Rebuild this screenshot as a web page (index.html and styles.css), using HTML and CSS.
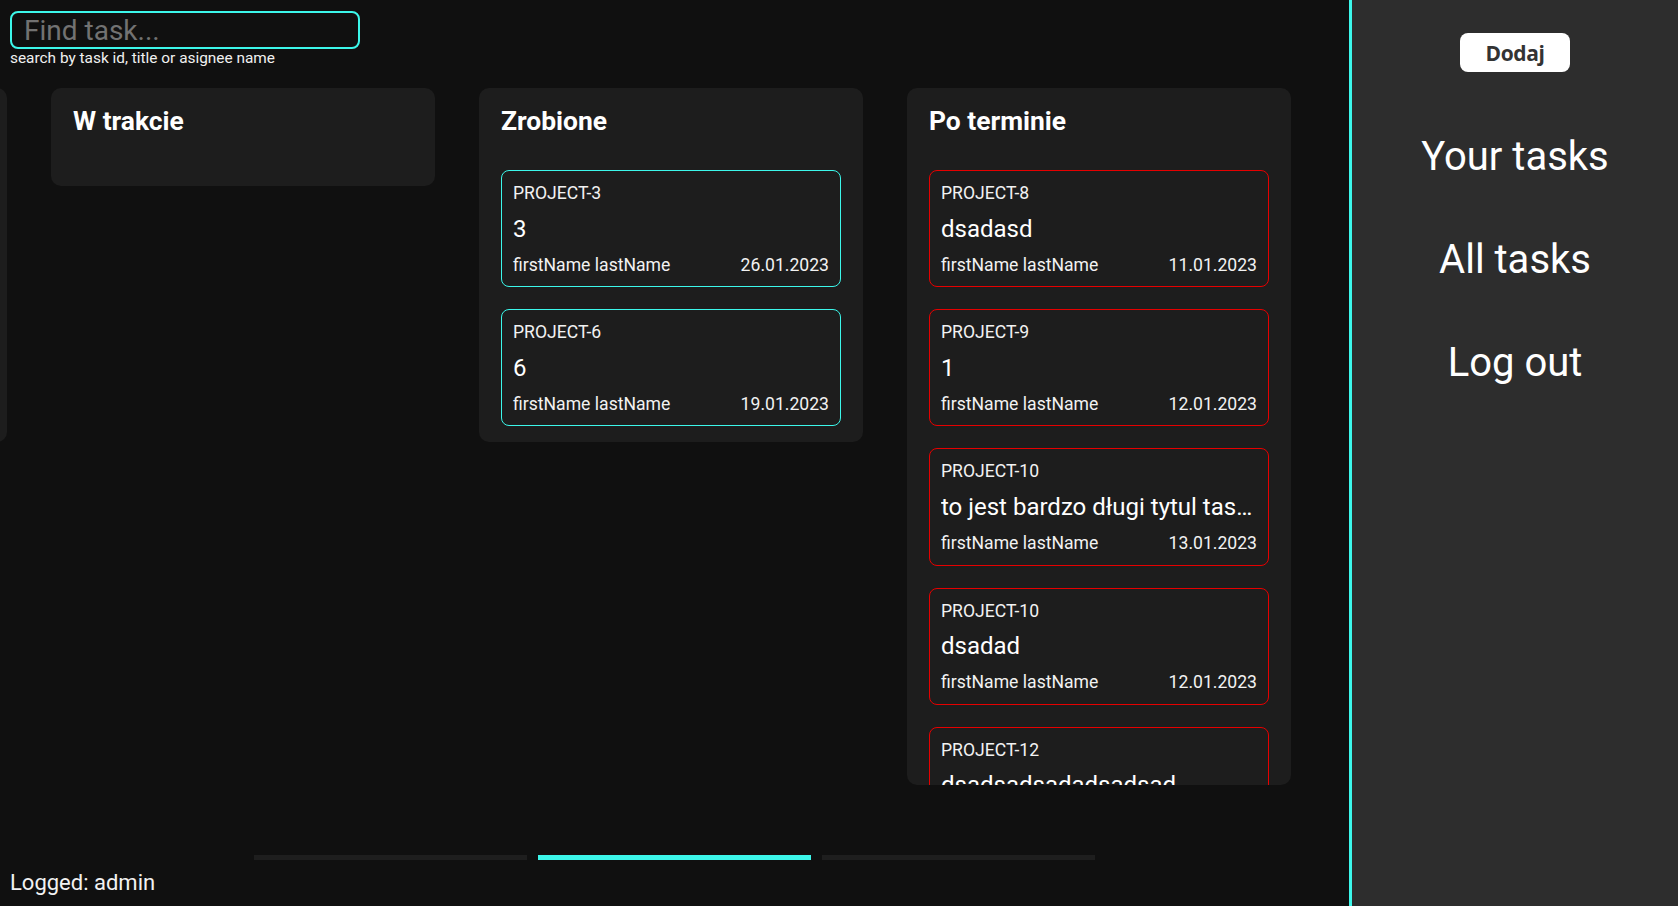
FILE: index.html
```html
<!DOCTYPE html>
<html lang="pl">
<head>
<meta charset="utf-8">
<title>Tasks</title>
<link rel="stylesheet" href="styles.css">
</head>
<body>
<div class="app">
  <main class="main">
    <div class="search">
      <input class="search-input" type="text" placeholder="Find task...">
      <div class="search-hint">search by task id, title or asignee name</div>
    </div>

    <div class="board">
      <div class="track">
        <section class="column">
          <h2 class="column-title">Do zrobienia</h2>
          <div class="cards">
            <div class="card card-ok">
              <div class="card-id">PROJECT-1</div>
              <div class="card-title">1</div>
              <div class="card-foot"><span>firstName lastName</span><span>28.01.2023</span></div>
            </div>
            <div class="card card-ok">
              <div class="card-id">PROJECT-2</div>
              <div class="card-title">2</div>
              <div class="card-foot"><span>firstName lastName</span><span>29.01.2023</span></div>
            </div>
          </div>
        </section>

        <section class="column">
          <h2 class="column-title">W trakcie</h2>
          <div class="cards"></div>
        </section>

        <section class="column">
          <h2 class="column-title">Zrobione</h2>
          <div class="cards">
            <div class="card card-ok">
              <div class="card-id">PROJECT-3</div>
              <div class="card-title">3</div>
              <div class="card-foot"><span>firstName lastName</span><span>26.01.2023</span></div>
            </div>
            <div class="card card-ok">
              <div class="card-id">PROJECT-6</div>
              <div class="card-title">6</div>
              <div class="card-foot"><span>firstName lastName</span><span>19.01.2023</span></div>
            </div>
          </div>
        </section>

        <section class="column column-tall">
          <h2 class="column-title">Po terminie</h2>
          <div class="cards">
            <div class="card card-late">
              <div class="card-id">PROJECT-8</div>
              <div class="card-title">dsadasd</div>
              <div class="card-foot"><span>firstName lastName</span><span>11.01.2023</span></div>
            </div>
            <div class="card card-late">
              <div class="card-id">PROJECT-9</div>
              <div class="card-title">1</div>
              <div class="card-foot"><span>firstName lastName</span><span>12.01.2023</span></div>
            </div>
            <div class="card card-late">
              <div class="card-id">PROJECT-10</div>
              <div class="card-title">to jest bardzo długi tytul taska który się nie mieści</div>
              <div class="card-foot"><span>firstName lastName</span><span>13.01.2023</span></div>
            </div>
            <div class="card card-late">
              <div class="card-id">PROJECT-10</div>
              <div class="card-title">dsadad</div>
              <div class="card-foot"><span>firstName lastName</span><span>12.01.2023</span></div>
            </div>
            <div class="card card-late">
              <div class="card-id">PROJECT-12</div>
              <div class="card-title">dsadsadsadadsadsad</div>
              <div class="card-foot"><span>firstName lastName</span><span>14.01.2023</span></div>
            </div>
          </div>
        </section>
      </div>
    </div>

    <div class="pager">
      <span class="pager-bar"></span>
      <span class="pager-bar pager-bar-active"></span>
      <span class="pager-bar"></span>
    </div>

    <footer class="logged">Logged: admin</footer>
  </main>

  <aside class="sidebar">
    <button class="add-btn" type="button">Dodaj</button>
    <nav class="nav">
      <a class="nav-link" href="#">Your tasks</a>
      <a class="nav-link" href="#">All tasks</a>
      <a class="nav-link" href="#">Log out</a>
    </nav>
  </aside>
</div>
</body>
</html>
```

FILE: styles.css
```css
* {
  box-sizing: border-box;
}

html, body {
  margin: 0;
  padding: 0;
  height: 100%;
}

body {
  font-family: "Roboto", "Liberation Sans", sans-serif;
  background: #101010;
  color: #ffffff;
}

.app {
  display: flex;
  height: 100vh;
  overflow: hidden;
}

/* ---------- main ---------- */
.main {
  flex: 1;
  min-width: 0;
  display: flex;
  flex-direction: column;
  background: #101010;
  overflow: hidden;
}

.search {
  padding: 11px 0 0 10px;
  display: flex;
  flex-direction: column;
  align-items: flex-start;
}

.search-input {
  width: 350px;
  height: 38px;
  border: 2px solid #3cf7ea;
  border-radius: 8px;
  background: transparent;
  padding: 0 12px;
  font-family: "Roboto", "Liberation Sans", sans-serif;
  font-size: 28px;
  color: #ffffff;
  outline: none;
}

.search-input::placeholder {
  color: #727272;
}

.search-hint {
  font-size: 15.4px;
  line-height: 18px;
  color: #f0f0f0;
}

.board {
  margin-top: 21px;
  overflow: hidden;
}

.track {
  display: flex;
  align-items: flex-start;
  gap: 44px;
  margin-left: -377px;
}

.column {
  flex: 0 0 384px;
  width: 384px;
  background: #1d1d1d;
  border-radius: 10px;
  padding: 18px 22px 16px;
  overflow: hidden;
}

.column-tall {
  max-height: 697px;
}

.column-title {
  margin: 0 0 34px;
  font-size: 26.4px;
  font-weight: 700;
  line-height: 30px;
  color: #ffffff;
}

.cards {
  display: flex;
  flex-direction: column;
  gap: 22px;
}

.card {
  display: flex;
  flex-direction: column;
  gap: 11px;
  padding: 12px 11px 11px;
  border: 1px solid;
  border-radius: 8px;
  background: #1d1d1d;
  flex-shrink: 0;
}

.card-ok {
  border-color: #3cf7ea;
}

.card-late {
  border-color: #e60000;
}

.card-id {
  font-size: 17.6px;
  line-height: 20.6px;
  color: #f2f2f2;
}

.card-title {
  font-size: 24px;
  line-height: 28px;
  color: #ffffff;
  white-space: nowrap;
  overflow: hidden;
  text-overflow: ellipsis;
}

.card-foot {
  display: flex;
  justify-content: space-between;
  margin-top: 1px;
  font-size: 17.6px;
  line-height: 20.6px;
  color: #f2f2f2;
}

.pager {
  margin-top: 70px;
  display: flex;
  justify-content: center;
  gap: 11px;
}

.pager-bar {
  width: 273px;
  height: 5px;
  background: #1e1e1e;
}

.pager-bar-active {
  background: #3cf7ea;
}

.logged {
  margin-top: auto;
  padding: 0 10px 10px;
  font-size: 22px;
  line-height: 26px;
  color: #f2f2f2;
}

/* ---------- sidebar ---------- */
.sidebar {
  flex: 0 0 329px;
  width: 329px;
  background: #2d2d2d;
  border-left: 3px solid #3cf7ea;
  display: flex;
  flex-direction: column;
  align-items: center;
  padding-top: 33px;
}

.add-btn {
  width: 110px;
  height: 39px;
  border: none;
  border-radius: 8px;
  background: #ffffff;
  color: #333333;
  font-family: "Open Sans", "Noto Sans", sans-serif;
  font-size: 21px;
  font-weight: 700;
  letter-spacing: -0.4px;
  padding: 0;
  cursor: pointer;
}

.nav {
  margin-top: 61px;
  display: flex;
  flex-direction: column;
  align-items: center;
  gap: 56px;
}

.nav-link {
  font-size: 40px;
  line-height: 47px;
  color: #ffffff;
  text-decoration: none;
}
```
